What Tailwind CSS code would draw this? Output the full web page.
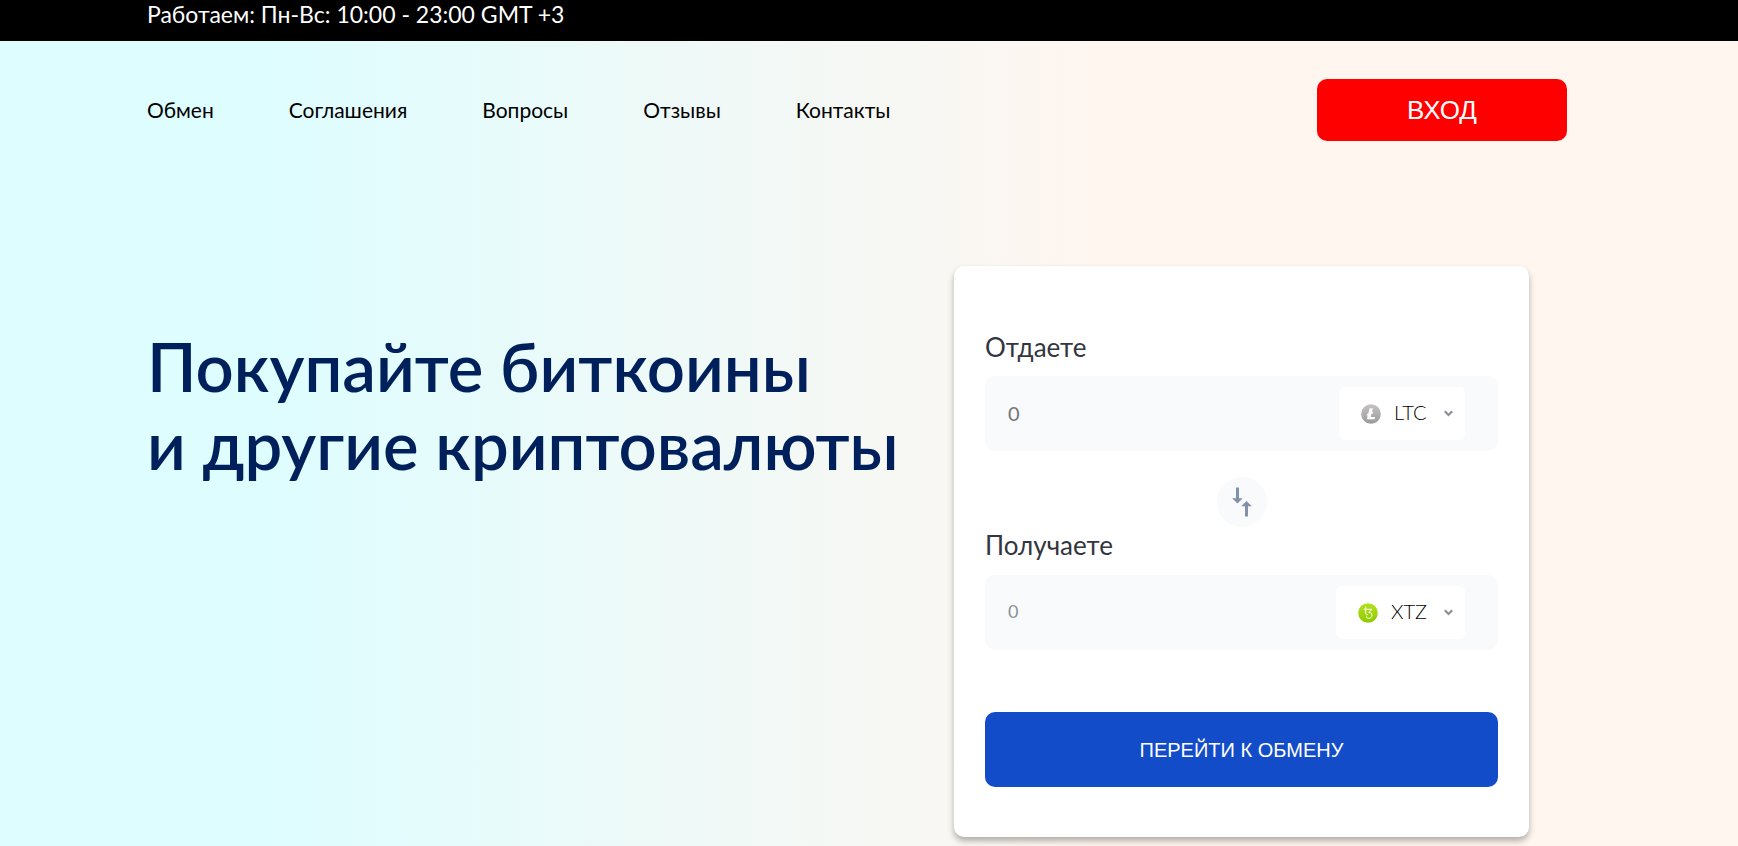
<!DOCTYPE html>
<html lang="ru">
<head>
<meta charset="utf-8">
<meta name="viewport" content="width=device-width, initial-scale=1">
<title>Обмен криптовалют</title>
<script src="https://cdn.jsdelivr.net/npm/@tailwindcss/browser@4"></script>
</head>
<body class="flex min-h-screen flex-col overflow-x-hidden bg-[linear-gradient(90deg,#defdff_15%,#fff6f0_63%)] font-[Lato,'Open_Sans',sans-serif] text-black">
  <div class="h-[41px] bg-black pl-[147px] text-[23px] leading-[28px] text-white">Работаем: Пн-Вс: 10:00 - 23:00 GMT +3</div>

  <header class="flex items-center justify-between pt-[38px] pr-[171px] pl-[147px]">
    <nav class="flex gap-[75px] text-[21px] leading-[26px]">
      <a href="#">Обмен</a>
      <a href="#">Соглашения</a>
      <a href="#">Вопросы</a>
      <a href="#">Отзывы</a>
      <a href="#">Контакты</a>
    </nav>
    <button type="button" class="h-[62px] w-[250px] rounded-[10px] bg-[#ff0000] font-['Liberation_Sans',sans-serif] text-[26px] text-white">ВХОД</button>
  </header>

  <main class="flex items-start justify-between pt-[125px] pr-[209px] pb-[9px] pl-[147px]">
    <h1 class="pt-[61px] text-[67px] leading-[78px] font-semibold whitespace-nowrap text-[#00205b]">Покупайте биткоины<br>и другие криптовалюты</h1>

    <form class="flex w-[575px] shrink-0 flex-col rounded-[10px] bg-white px-[31px] pt-[64px] pb-[50px] shadow-[0_4px_6px_rgba(0,0,0,0.3)]">
      <label for="give" class="text-[26px] leading-[34px] text-[#33363f]">Отдаете</label>
      <div class="mt-[12px] flex h-[75px] items-center rounded-[10px] bg-[#f9fafc] pr-[33px] pl-[23px]">
        <input id="give" type="text" placeholder="0" class="min-w-0 flex-1 bg-transparent pb-[2px] text-[20px] outline-none placeholder:text-[#757575]">
        <div class="relative flex h-[53px] items-center rounded-[6px] bg-white">
          <svg class="pointer-events-none absolute left-[22px] size-[20px]" viewBox="0 0 20 20" aria-hidden="true">
            <defs><linearGradient id="ltc" x1="0" y1="0" x2="0" y2="1"><stop offset="0" stop-color="#c4c2c2"/><stop offset="1" stop-color="#9c9a9b"/></linearGradient></defs>
            <circle cx="10" cy="10" r="9.8" fill="url(#ltc)"/>
            <path d="M8.6 4.3h3.3l-1 4 1.5-.6-.5 1.800-1.500.6-.7 2.800h4.500l-.6 2.300H5.800l1-4-1.200.5.5-1.800 1.200-.5z" fill="#fff"/>
          </svg>
          <select aria-label="Валюта, которую отдаете" class="h-[53px] appearance-none rounded-[6px] bg-transparent pr-[38px] pb-[4px] pl-[55px] text-[20px] font-light text-black outline-none"><option>LTC</option></select>
          <svg class="pointer-events-none absolute right-[12px] h-[7px] w-[9px]" viewBox="0 0 9 7" fill="none" stroke="#8d8f95" stroke-width="2.2" aria-hidden="true"><path d="M.8 1.2 4.5 5 8.2 1.2"/></svg>
        </div>
      </div>

      <button type="button" aria-label="Поменять местами" class="mt-[26px] flex size-[50px] items-center justify-center self-center rounded-full bg-[#f9fafc]">
        <svg class="h-[30px] w-[20px]" viewBox="0 0 20 30" fill="#8391a8" aria-hidden="true"><path d="M4 .5h3v10.700h3.700L5.500 16.500.200 11.200H4zM13 29.500V19.300H9.200L14.500 14l5.300 5.300H16V29.500z"/></svg>
      </button>

      <label for="get" class="mt-px text-[26px] leading-[34px] text-[#33363f]">Получаете</label>
      <div class="mt-[13px] flex h-[75px] items-center rounded-[10px] bg-[#f9fafc] pr-[33px] pl-[23px]">
        <input id="get" type="text" placeholder="0" class="min-w-0 flex-1 bg-transparent pb-[2px] text-[18px] outline-none placeholder:text-[#8b9196]">
        <div class="relative flex h-[53px] items-center rounded-[6px] bg-white">
          <svg class="pointer-events-none absolute left-[22px] size-[20px]" viewBox="0 0 20 20" aria-hidden="true">
            <defs><linearGradient id="xtz" x1="0" y1="0" x2="0" y2="1"><stop offset="0" stop-color="#b3e01b"/><stop offset="1" stop-color="#8ecb04"/></linearGradient></defs>
            <circle cx="10" cy="10" r="9.8" fill="url(#xtz)"/>
            <path d="M7.700 3.800v6.600c0 1.500 1.600 1.600 2.400.9M5.600 6.300H14L10.800 9.500c2.100-.2 3.200 1.100 3.200 2.700 0 1.900-1.500 3.200-3.200 3.200-1.500 0-2.600-.9-2.300-2" fill="none" stroke="#fff" stroke-width="1"/>
          </svg>
          <select aria-label="Валюта, которую получаете" class="h-[53px] appearance-none rounded-[6px] bg-transparent pr-[38px] pb-[4px] pl-[55px] text-[20px] font-light text-black outline-none"><option>XTZ</option></select>
          <svg class="pointer-events-none absolute right-[12px] h-[7px] w-[9px]" viewBox="0 0 9 7" fill="none" stroke="#8d8f95" stroke-width="2.2" aria-hidden="true"><path d="M.8 1.2 4.500 5 8.200 1.200"/></svg>
        </div>
      </div>

      <button type="submit" class="mt-[62px] h-[75px] rounded-[10px] bg-[#124cc8] font-['Liberation_Sans',sans-serif] text-[20px] text-white">ПЕРЕЙТИ К ОБМЕНУ</button>
    </form>
  </main>
</body>
</html>
